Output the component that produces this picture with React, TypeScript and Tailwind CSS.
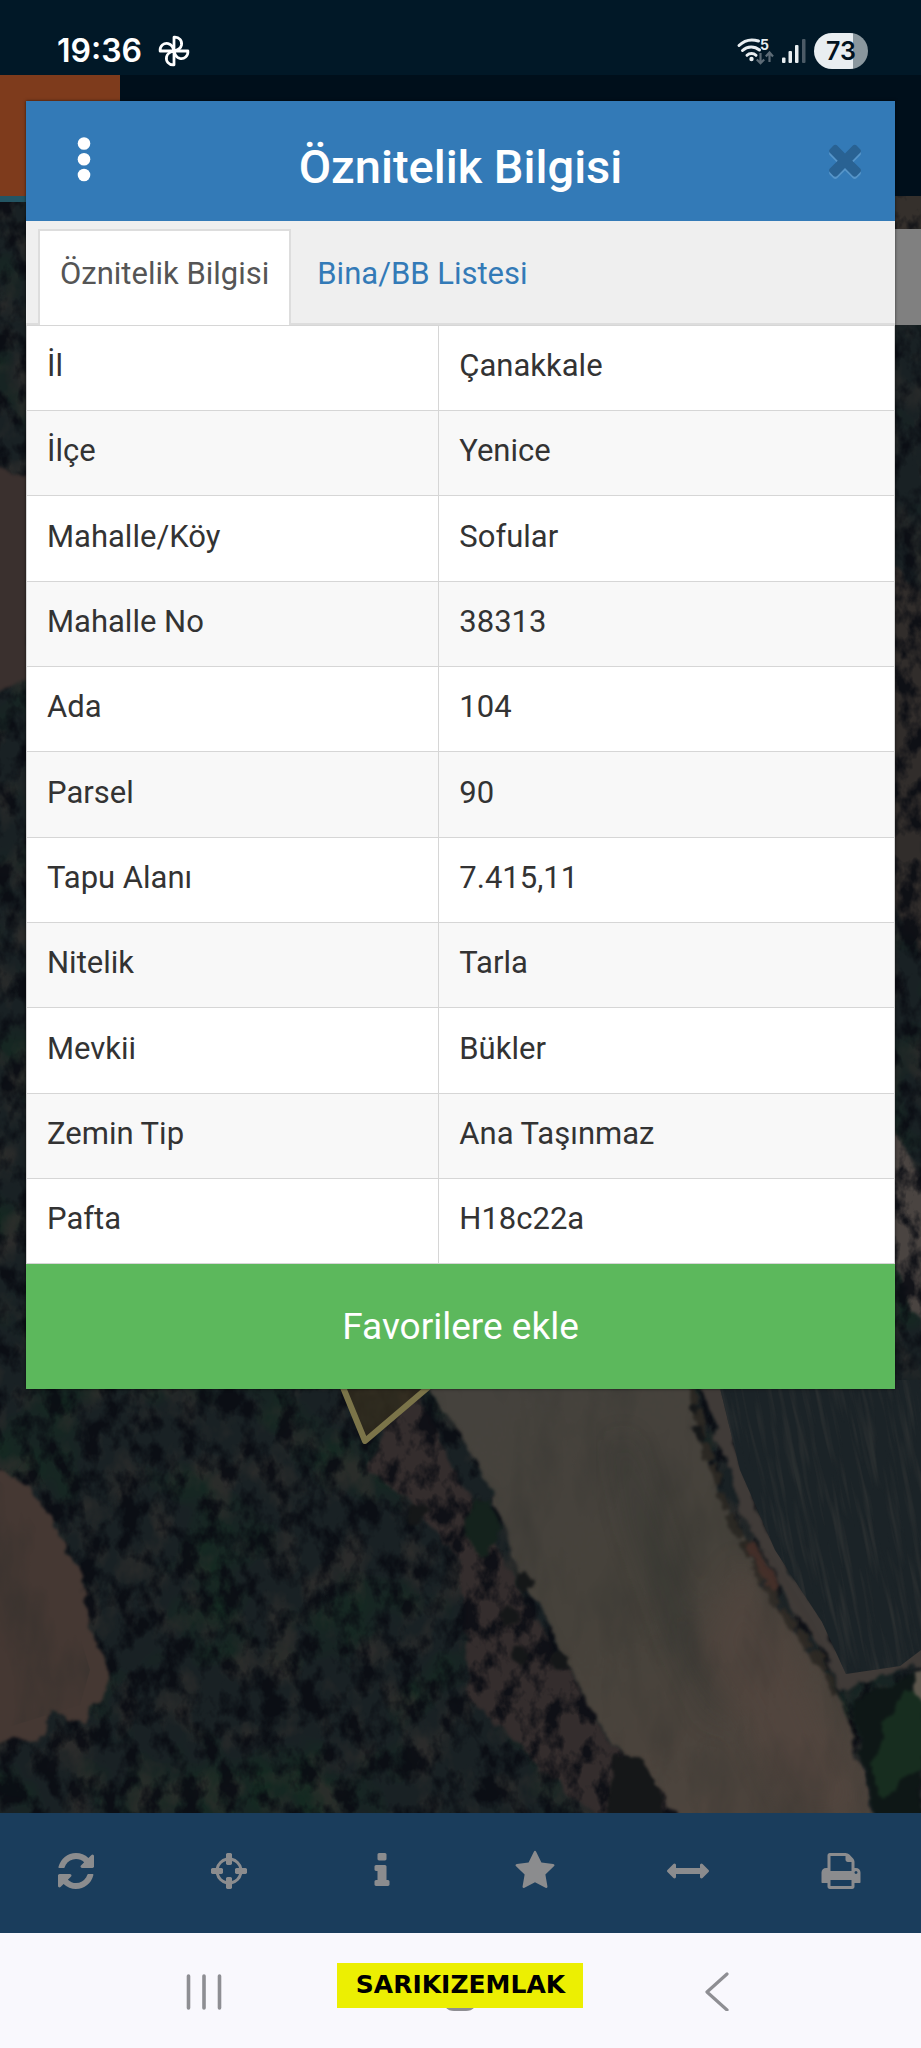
import React, { useState } from "react";

const ATTRIBUTES: [string, string][] = [
  ["İl", "Çanakkale"],
  ["İlçe", "Yenice"],
  ["Mahalle/Köy", "Sofular"],
  ["Mahalle No", "38313"],
  ["Ada", "104"],
  ["Parsel", "90"],
  ["Tapu Alanı", "7.415,11"],
  ["Nitelik", "Tarla"],
  ["Mevkii", "Bükler"],
  ["Zemin Tip", "Ana Taşınmaz"],
  ["Pafta", "H18c22a"],
];

const TIMES =
  "M1490 1322q0 40-28 68l-136 136q-28 28-68 28t-68-28l-294-294-294 294q-28 28-68 28t-68-28l-136-136q-28-28-28-68t28-68l294-294-294-294q-28-28-28-68t28-68l136-136q28-28 68-28t68 28l294 294 294-294q28-28 68-28t68 28l136 136q28 28 28 68t-28 68l-294 294 294 294q28 28 28 68z";

const TOOLS: { label: string; path: string }[] = [
  {
    label: "Yenile",
    path: "M1639 1056q0 5-1 7-64 268-268 434.5t-478 166.5q-146 0-282.5-55t-243.5-157l-129 129q-19 19-45 19t-45-19-19-45v-448q0-26 19-45t45-19h448q26 0 45 19t19 45-19 45l-137 137q71 66 161 102t187 36q134 0 250-65t186-179q11-17 53-117 8-23 30-23h192q13 0 22.5 9.5t9.5 22.5zm25-800v448q0 26-19 45t-45 19h-448q-26 0-45-19t-19-45 19-45l138-138q-148-137-349-137-134 0-250 65t-186 179q-11 17-53 117-8 23-30 23h-199q-13 0-22.5-9.5t-9.5-22.5v-7q65-268 270-434.5t480-166.5q146 0 284 55.5t245 156.5l130-129q19-19 45-19t45 19 19 45z",
  },
  {
    label: "Konum",
    path: "M1325 1024h-109q-26 0-45-19t-19-45v-128q0-26 19-45t45-19h109q-32-108-112.5-188.5t-188.5-112.5v109q0 26-19 45t-45 19h-128q-26 0-45-19t-19-45v-109q-108 32-188.5 112.5t-112.5 188.5h109q26 0 45 19t19 45v128q0 26-19 45t-45 19h-109q32 108 112.5 188.5t188.5 112.5v-109q0-26 19-45t45-19h128q26 0 45 19t19 45v109q108-32 188.5-112.5t112.5-188.5zm339-192v128q0 26-19 45t-45 19h-143q-37 161-154.5 278.5t-278.5 154.5v143q0 26-19 45t-45 19h-128q-26 0-45-19t-19-45v-143q-161-37-278.5-154.5t-154.5-278.5h-143q-26 0-45-19t-19-45v-128q0-26 19-45t45-19h143q37-161 154.5-278.5t278.5-154.5v-143q0-26 19-45t45-19h128q26 0 45 19t19 45v143q161 37 278.5 154.5t154.5 278.5h143q26 0 45 19t19 45z",
  },
  {
    label: "Bilgi",
    path: "M1216 1344v128q0 26-19 45t-45 19h-512q-26 0-45-19t-19-45v-128q0-26 19-45t45-19h64v-384h-64q-26 0-45-19t-19-45v-128q0-26 19-45t45-19h384q26 0 45 19t19 45v576h64q26 0 45 19t19 45zm-128-1152v192q0 26-19 45t-45 19h-256q-26 0-45-19t-19-45v-192q0-26 19-45t45-19h256q26 0 45 19t19 45z",
  },
  {
    label: "Favoriler",
    path: "M1728 647q0 22-26 48l-363 354 86 500q1 7 1 20 0 21-10.5 35.5t-30.5 14.5q-19 0-40-12l-449-236-449 236q-22 12-40 12-21 0-31.5-14.5t-10.5-35.5q0-6 2-20l86-500-364-354q-25-27-25-48 0-37 56-46l502-73 225-455q19-41 49-41t49 41l225 455 502 73q56 9 56 46z",
  },
  {
    label: "Ölçüm",
    path: "M1792 896q0 26-19 45l-256 256q-19 19-45 19t-45-19-19-45v-128h-1024v128q0 26-19 45t-45 19-45-19l-256-256q-19-19-19-45t19-45l256-256q19-19 45-19t45 19 19 45v128h1024v-128q0-26 19-45t45-19 45 19l256 256q19 19 19 45z",
  },
  {
    label: "Yazdır",
    path: "M448 1536h896v-256h-896v256zm0-640h896v-384h-160q-40 0-68-28t-28-68v-160h-640v640zm1152 64q0-26-19-45t-45-19-45 19-19 45 19 45 45 19 45-19 19-45zm128 0v416q0 13-9.5 22.5t-22.5 9.5h-224v160q0 40-28 68t-68 28h-960q-40 0-68-28t-28-68v-160h-224q-13 0-22.5-9.5t-9.5-22.5v-416q0-79 56.5-135.5t135.5-56.5h64v-544q0-40 28-68t68-28h672q40 0 88 20t76 48l152 152q28 28 48 76t20 88v256h64q79 0 135.5 56.5t56.5 135.5z",
  },
];

function StatusBar() {
  return (
    <div className="flex h-[75px] items-end justify-between bg-[#011827] pr-[53px] pb-1 pl-[57px] text-white">
      <div className="flex items-center gap-4">
        <span className="font-[Inter,sans-serif] text-[32px] leading-10 font-semibold">19:36</span>
        <svg className="size-8" viewBox="0 0 30 30" fill="none" stroke="currentColor" strokeWidth="2.6" strokeLinejoin="round" aria-hidden="true">
          {[0, 90, 180, 270].map((a) => (
            <path key={a} transform={`rotate(${a} 15 15)`} d="M15 15V2C20 1.500 22.800 5.500 22 9.500C21.300 12.500 18.500 14.300 15 15Z" />
          ))}
        </svg>
      </div>
      <div className="flex h-10 items-center gap-2">
        <svg className="h-8 w-[38px]" viewBox="0 0 38 32" fill="none" aria-hidden="true">
          <g stroke="#e9eef1" strokeWidth="3" strokeLinecap="round">
            <path d="M3 10.500C8.500 5 16 4 22.500 6" />
            <path d="M6.500 15.500C11.500 10.800 18.500 10.800 23.500 15" />
            <path d="M11 20.300C13.500 17.800 17.500 17.800 20 20.300" />
          </g>
          <circle cx="15.500" cy="24" r="2.200" fill="#e9eef1" />
          <text x="24" y="15" fontFamily="Inter, sans-serif" fontSize="14" fontWeight="700" fill="#e9eef1">5</text>
          <g stroke="#5d6b76" strokeWidth="2.200">
            <path d="M24.500 18V28M20.800 24.500L24.500 28.200L28.200 24.500" />
            <path d="M33.500 27V18M29.800 21.500L33.500 17.500L37 21.500" />
          </g>
        </svg>
        <svg className="h-6 w-6" viewBox="0 0 24 24" aria-hidden="true">
          <g fill="#e9eef1">
            <rect x="0" y="18.500" width="3.500" height="5.500" rx="1" />
            <rect x="6.500" y="12" width="3.500" height="12" rx="1" />
            <rect x="13" y="6" width="3.500" height="18" rx="1" />
          </g>
          <rect x="20" y="0" width="3.500" height="24" rx="1" fill="#4b5a66" />
        </svg>
        <div className="flex h-9 w-[54px] items-center justify-center rounded-full bg-linear-to-r from-[#e9eef1] from-73% to-[#8a979e] to-73% font-[Inter,sans-serif] text-[25px] leading-9 font-semibold text-[#02131f]">
          73
        </div>
      </div>
    </div>
  );
}

function SatelliteMap() {
  return (
    <svg className="absolute inset-0 size-full" viewBox="0 196 921 1617" preserveAspectRatio="xMidYMax slice" aria-hidden="true">
      <defs>
        <filter id="canopyDark" x="0" y="0" width="100%" height="100%" colorInterpolationFilters="sRGB">
          <feTurbulence type="fractalNoise" baseFrequency="0.05 0.036" numOctaves="4" seed="7" />
          <feColorMatrix values="0 0 0 0 0.035  0 0 0 0 0.045  0 0 0 0 0.07  4 0 0 0 -1.750" />
        </filter>
        <filter id="canopyLight" x="0" y="0" width="100%" height="100%" colorInterpolationFilters="sRGB">
          <feTurbulence type="fractalNoise" baseFrequency="0.03 0.022" numOctaves="4" seed="21" />
          <feColorMatrix values="0 0 0 0 0.2  0 0 0 0 0.19  0 0 0 0 0.18  0 3 0 0 -1.400" />
        </filter>
        <filter id="canopyGreen" x="0" y="0" width="100%" height="100%" colorInterpolationFilters="sRGB">
          <feTurbulence type="fractalNoise" baseFrequency="0.012" numOctaves="3" seed="4" />
          <feColorMatrix values="0 0 0 0 0.08  0 0 0 0 0.16  0 0 0 0 0.13  0 0 4 0 -2.100" />
        </filter>
        <filter id="rough" x="-5%" y="-5%" width="110%" height="110%" colorInterpolationFilters="sRGB">
          <feTurbulence type="fractalNoise" baseFrequency="0.06" numOctaves="3" seed="3" result="n" />
          <feDisplacementMap in="SourceGraphic" in2="n" scale="14" xChannelSelector="R" yChannelSelector="G" />
          <feGaussianBlur stdDeviation="1.600" />
        </filter>
        <filter id="mottle" x="0" y="0" width="100%" height="100%" colorInterpolationFilters="sRGB">
          <feTurbulence type="fractalNoise" baseFrequency="0.02 0.008" numOctaves="4" seed="12" />
          <feColorMatrix values="0 0 0 0 0.16  0 0 0 0 0.17  0 0 0 0 0.16  0 2.200 0 0 -0.950" />
          <feComposite in2="SourceAlpha" operator="in" />
        </filter>
        <filter id="furrow" x="0" y="0" width="100%" height="100%" colorInterpolationFilters="sRGB">
          <feTurbulence type="fractalNoise" baseFrequency="0.16 0.012" numOctaves="3" seed="9" />
          <feColorMatrix values="0 0 0 0 0.2  0 0 0 0 0.21  0 0 0 0 0.21  3 0 0 0 -1.350" />
        </filter>
        <filter id="soft">
          <feGaussianBlur stdDeviation="14" />
        </filter>
        <linearGradient id="fieldFill" x1="0" y1="0" x2="0.600" y2="1">
          <stop offset="0" stopColor="#45423d" />
          <stop offset="0.550" stopColor="#46423b" />
          <stop offset="1" stopColor="#4d443d" />
        </linearGradient>
        <clipPath id="plowed">
          <path d="M718 1380L740 1470L775 1550L822 1622L846 1674L900 1666L921 1650V1380Z" />
        </clipPath>
      </defs>

      <rect y="196" width="921" height="1617" fill="#192124" />
      <rect y="196" width="921" height="1617" filter="url(#canopyGreen)" />
      <rect y="196" width="921" height="1617" filter="url(#canopyLight)" opacity="0.700" />

      <g filter="url(#rough)">
        <path d="M890 190H925V232H890Z" fill="#35302c" />
        <path d="M890 560L925 600V960L890 900Z" fill="#312d2b" />
        <path d="M890 1120L925 1190V1330L890 1260Z" fill="#4a4441" />
        <path d="M410 1380L470 1500L530 1610L610 1740L690 1820H600L520 1750L470 1700L460 1560L400 1490L365 1470Z" fill="#342d2d" />
      </g>
      <rect y="196" width="921" height="1617" filter="url(#canopyDark)" opacity="0.850" />

      <g filter="url(#rough)">
        <path d="M-8 466L30 478V680L-8 690Z" fill="#3a302e" />
        <path d="M-10 1466L28 1486L50 1512L62 1545L82 1575L84 1605L95 1635L106 1668L104 1696L82 1722L50 1712L44 1738L-10 1742Z" fill="#453833" />
        <path d="M425 1380L458 1430L492 1492L504 1525L520 1572L545 1615L565 1660L585 1700L615 1745L650 1780L680 1820H878L855 1750L840 1695L800 1640L760 1580L728 1505L702 1450L688 1380Z" fill="url(#fieldFill)" />
        <path d="M700 1380L718 1440L746 1520L784 1596L822 1650L842 1690L925 1664V1642L846 1668L822 1620L775 1548L742 1470L722 1380Z" fill="#403b38" />
        <path d="M692 1385L706 1450L735 1530L775 1600L820 1660L838 1700" fill="none" stroke="#2b2823" strokeWidth="8" strokeDasharray="22 5" />
        <path d="M748 1542L775 1590" fill="none" stroke="#432e28" strokeWidth="9" />
      </g>
      <g filter="url(#soft)" opacity="0.450">
        <path d="M740 1560L790 1640L840 1760L860 1813H790L700 1640Z" fill="#58473f" />
        <path d="M620 1440L640 1530L680 1640L720 1720L690 1640L650 1530Z" fill="#2d302d" stroke="#2d302d" strokeWidth="14" />
      </g>
      <path d="M425 1380L458 1430L492 1492L520 1572L565 1660L615 1745L680 1813H873L840 1695L760 1580L702 1450L688 1380Z" filter="url(#mottle)" opacity="0.350" />
      <path d="M-2 1480L20 1500L60 1570L90 1670L80 1705L-2 1730Z" filter="url(#mottle)" opacity="0.500" />

      <g clipPath="url(#plowed)">
        <rect x="700" y="1380" width="221" height="310" fill="#1b2327" />
        <g transform="rotate(-12 820 1530)" opacity="0.600">
          <rect x="640" y="1300" width="400" height="460" filter="url(#furrow)" />
        </g>
      </g>

      <g filter="url(#rough)">
        <path d="M852 1700L885 1686L921 1672V1820H880L862 1760Z" fill="#0e1716" />
        <path d="M886 1720L906 1690L925 1690V1770L900 1780L884 1800L872 1770Z" fill="#172d1f" />
        <path d="M914 1672L928 1666V1704L916 1696Z" fill="#5d574d" />
        <g fill="#151718">
          <circle cx="509" cy="1616" r="9" />
          <circle cx="519" cy="1654" r="9" />
          <circle cx="560" cy="1662" r="9" />
          <circle cx="525" cy="1582" r="9" />
          <circle cx="416" cy="1514" r="11" />
          <circle cx="698" cy="1432" r="6" />
          <circle cx="694" cy="1410" r="5" />
          <path d="M614 1752L640 1762L656 1785L668 1820H604Z" />
          <path d="M472 1500L494 1504L500 1540L482 1556L464 1530Z" fill="#14221c" />
        </g>
      </g>

      <path d="M340 1380L365 1441L432 1384" fill="#332d1e" fillOpacity="0.800" stroke="#7b7449" strokeWidth="6" strokeLinejoin="round" />
    </svg>
  );
}

function Toolbar() {
  return (
    <nav className="grid h-[120px] grid-cols-6 bg-[#1a3d5c] pr-1 pb-1">
      {TOOLS.map((tool) => (
        <button key={tool.label} type="button" aria-label={tool.label} className="flex items-center justify-center text-[#8b8c8e]">
          <svg className="size-[42px]" viewBox="0 0 1792 1792" fill="currentColor" aria-hidden="true">
            <path d={tool.path} />
          </svg>
        </button>
      ))}
    </nav>
  );
}

function ParcelDialog() {
  const [tab, setTab] = useState(0);
  const tabs = ["Öznitelik Bilgisi", "Bina/BB Listesi"];
  return (
    <section role="dialog" aria-labelledby="dialog-title" className="z-10 mx-[26px] mt-[26px] mb-[160px] self-start bg-white shadow-[0_0_3px_rgba(0,0,0,0.6)] [grid-area:1/1]">
      <header className="grid h-[120px] grid-cols-[64px_1fr_64px] items-center bg-[#337ab7] px-[26px]">
        <button type="button" aria-label="Menü" className="flex size-16 items-center justify-center text-white">
          <svg className="h-12 w-4" viewBox="0 0 16 48" fill="currentColor" aria-hidden="true">
            <circle cx="8" cy="6.500" r="6.300" />
            <circle cx="8" cy="22.300" r="6.300" />
            <circle cx="8" cy="38" r="6.300" />
          </svg>
        </button>
        <h1 id="dialog-title" className="pt-3 text-center text-[47px] leading-[56px] font-medium text-white">
          Öznitelik Bilgisi
        </h1>
        <button type="button" aria-label="Kapat" className="flex size-16 items-center justify-end pb-1">
          <svg className="size-12" viewBox="0 0 1792 1792" aria-hidden="true">
            <path d={TIMES} fill="#5695c9" transform="translate(0 90)" />
            <path d={TIMES} fill="#296293" />
          </svg>
        </button>
      </header>
      <div role="tablist" className="flex h-[104px] items-stretch border-b-2 border-[#ddd] bg-[#efefef] pt-2 pl-3 text-[31px] leading-10">
        {tabs.map((label, i) => (
          <button
            key={label}
            role="tab"
            type="button"
            aria-selected={tab === i}
            onClick={() => setTab(i)}
            className={
              tab === i
                ? "-mb-[2px] mr-1 border-2 border-b-0 border-[#ddd] bg-white px-5 pb-2 text-[#555]"
                : "px-[22px] pb-1 text-[#337ab7]"
            }
          >
            {label}
          </button>
        ))}
      </div>
      <table className="w-full table-fixed border-collapse text-left text-[31px] leading-10 text-[#333]">
        <tbody>
          {ATTRIBUTES.map(([name, value]) => (
            <tr key={name} className="h-[85px] even:bg-[#f8f8f8] nth-[3n]:h-[86px]">
              <th scope="row" className="w-[47.5%] border border-[#d6d6d6] px-5 pb-1 font-normal">
                {name}
              </th>
              <td className="border border-[#d6d6d6] px-5 pb-1">{value}</td>
            </tr>
          ))}
        </tbody>
      </table>
      <button type="button" className="block h-[125px] w-full bg-[#5cb85c] text-center text-[37px] leading-[44px] text-white">
        Favorilere ekle
      </button>
    </section>
  );
}

function NavigationBar() {
  return (
    <nav className="grid h-[115px] grid-cols-3 items-center bg-[#f9f8fd] px-[76px] text-[#8e8e93]">
      <button type="button" aria-label="Son uygulamalar" className="flex justify-center">
        <svg className="h-10 w-9" viewBox="0 0 36 40" stroke="currentColor" strokeWidth="3.600" strokeLinecap="round" aria-hidden="true">
          <path d="M2.500 5V37M18 5V37M33.500 5V37" />
        </svg>
      </button>
      <div className="relative flex h-10 items-center justify-center">
        <button type="button" aria-label="Ana ekran" className="mt-1 h-[36px] w-9 rounded-xl border-[3px] border-[#8e8e93]" />
        <p className="absolute -top-2 flex h-[45px] w-[246px] items-center justify-center bg-[#ecef02] font-['DejaVu_Sans',sans-serif] text-[25px] leading-8 font-bold text-black">
          SARIKIZEMLAK
        </p>
      </div>
      <button type="button" aria-label="Geri" className="flex justify-center">
        <svg className="h-10 w-6" viewBox="0 0 24 40" fill="none" stroke="currentColor" strokeWidth="3.200" strokeLinecap="round" strokeLinejoin="round" aria-hidden="true">
          <path d="M22 3L2 21L22 39" />
        </svg>
      </button>
    </nav>
  );
}

export default function App() {
  return (
    <div className="flex min-h-screen flex-col bg-black font-[Roboto,sans-serif]">
      <StatusBar />
      <main className="grid flex-1">
        <div className="flex flex-col [grid-area:1/1]">
          <div className="relative z-[1] h-[121px] bg-[#000f1b]">
            <div className="h-[127px] w-[120px] border-b-6 border-[#235563] bg-[#7e3b1c]" />
          </div>
          <div className="relative flex-1 overflow-hidden">
            <SatelliteMap />
            <div className="relative mt-[33px] ml-auto h-[96px] w-1/2 bg-[#808080]" />
          </div>
          <Toolbar />
        </div>
        <ParcelDialog />
      </main>
      <NavigationBar />
    </div>
  );
}
